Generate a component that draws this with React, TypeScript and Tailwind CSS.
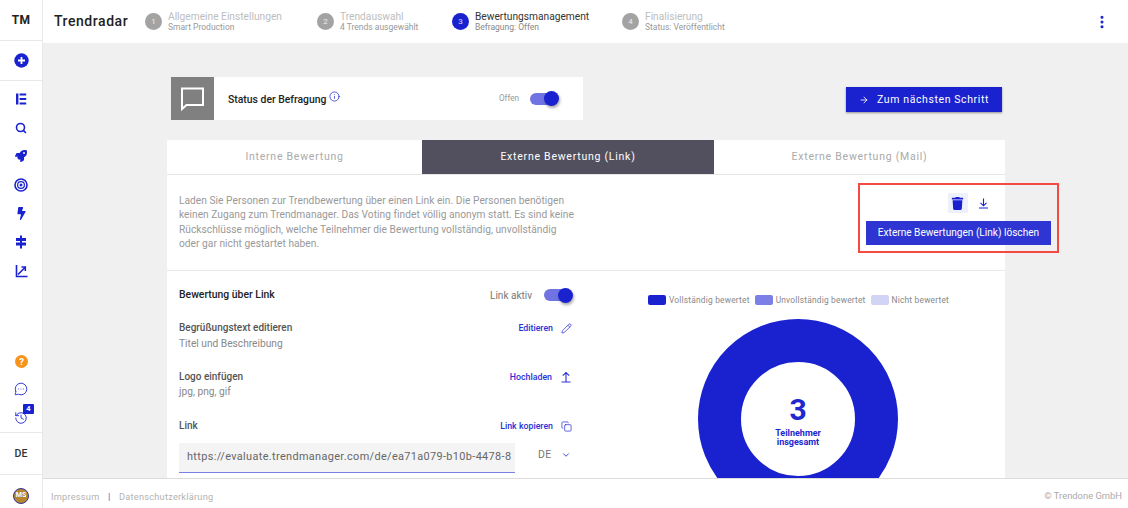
import React from "react";
import { FaRocket, FaTrash, FaBolt } from "react-icons/fa";
import { Pencil, Copy, ChevronDown, ArrowRight, Info, Search, EllipsisVertical, History, MessageCircleMore } from "lucide-react";

const blue = "#1a22d0";

function Step({ n, title, sub, active, w }: { n: number; title: string; sub: string; active?: boolean; w: string }) {
  return (
    <div className={`flex items-center gap-[6px] ${w}`}>
      <div className={`w-[17px] h-[17px] rounded-full flex items-center justify-center text-[8px] text-white/80 ${active ? "bg-[#1a22d0]" : "bg-[#a3a3a3]"}`}>{n}</div>
      <div className="flex flex-col">
        <span className={`text-[10.2px] leading-[12px] ${active ? "text-[#333]" : "text-[#bdbdbd]"}`}>{title}</span>
        <span className={`text-[8.5px] leading-[9.5px] ${active ? "text-[#888]" : "text-[#999]"}`}>{sub}</span>
      </div>
    </div>
  );
}

function Toggle() {
  return (
    <div className="relative w-[28px] h-[12px] rounded-full bg-[#6f74e2]">
      <div className="absolute right-[-1px] top-[-1.5px] w-[15px] h-[15px] rounded-full bg-[#1a22d0] shadow-[1px_2px_3px_rgba(0,0,0,0.35)]" />
    </div>
  );
}

function Row({ title, sub, action, icon }: { title: string; sub?: string; action: string; icon: React.ReactNode }) {
  return (
    <div className="flex justify-between items-start">
      <div className="flex flex-col">
        <span className="text-[10px] leading-[14px] font-medium text-[#555]">{title}</span>
        {sub && <span className="text-[10.2px] leading-[14px] mt-[1.5px] text-[#888]">{sub}</span>}
      </div>
      <div className="flex items-center gap-[8px] text-[#2a32d6]">
        <span className="text-[8.8px] leading-[14px] font-medium">{action}</span>
        {icon}
      </div>
    </div>
  );
}

function Legend({ color, label }: { color: string; label: string }) {
  return (
    <div className="flex items-center gap-[3px]">
      <span className={`w-[18px] h-[10px] rounded-[2px] ${color}`} />
      <span className="text-[8.4px] text-[#888] tracking-[0.2px]">{label}</span>
    </div>
  );
}

export default function App() {
  return (
    <div className="relative w-[1128px] h-[508px] flex overflow-hidden bg-white font-['Roboto',sans-serif]">
      <aside className="w-[43px] shrink-0 border-r border-[#e8e8e8] flex flex-col items-center">
        <div className="w-full h-[41px] flex items-center justify-center border-b border-[#e8e8e8] text-[12px] font-bold text-[#222] tracking-[0.2px]">TM</div>
        <div className="w-full h-[40px] flex items-center justify-center border-b border-[#e8e8e8]">
          <svg width="15" height="15" viewBox="0 0 15 15">
            <circle cx="7.5" cy="7.5" r="7.2" fill={blue} />
            <path d="M7.5 4v7M4 7.5h7" stroke="#fff" strokeWidth="1.8" />
          </svg>
        </div>
        <div className="flex flex-col items-center gap-[14.67px] mt-[11px] text-[#1a22d0]">
          <svg width="12" height="14" viewBox="0 0 12 14" fill={blue}><rect x="1" y="1.5" width="2.4" height="11" /><rect x="4.6" y="1.5" width="6.6" height="2" /><rect x="4.6" y="6" width="6.6" height="2" /><rect x="4.6" y="10.5" width="6.6" height="2" /></svg>
          <div className="h-[14px] flex items-center"><Search size={12} strokeWidth={3.2} /></div>
          <div className="h-[14px] flex items-center"><FaRocket size={12} /></div>
          <svg width="14" height="14" viewBox="0 0 14 14" fill="none" stroke={blue}><circle cx="7" cy="7" r="6" strokeWidth="1.6" /><circle cx="7" cy="7" r="3.4" strokeWidth="1.2" /><circle cx="7" cy="7" r="1.2" fill={blue} strokeWidth="0.5" /></svg>
          <div className="h-[14px] flex items-center"><FaBolt size={13} /></div>
          <svg width="12" height="14" viewBox="0 0 12 14" fill={blue}><rect x="1" y="3" width="10" height="3" /><rect x="1" y="7.5" width="10" height="3" /><rect x="5" y="0.5" width="2" height="13" /></svg>
          <svg width="13" height="14" viewBox="0 0 13 14" fill="none" stroke={blue} strokeWidth="1.6"><path d="M1.5 1v11.5H12.5" /><path d="M3 10.5l7-7" /><path d="M6.5 3H10.3V7" /></svg>
        </div>
        <div className="mt-auto flex flex-col items-center w-full">
          <svg width="13" height="13" viewBox="0 0 13 13" className="mb-[14px]"><circle cx="6.5" cy="6.5" r="6.5" fill="#f7931a" /><text x="6.5" y="10" textAnchor="middle" fontSize="9.5" fontWeight="700" fill="#fff" fontFamily="Roboto">?</text></svg>
          <MessageCircleMore size={14} color={blue} strokeWidth={1.5} className="mb-[15px]" />
          <div className="relative h-[14px] mb-[7px]">
            <History size={14} color={blue} strokeWidth={1.5} />
            <span className="absolute left-[9px] top-[-7px] w-[11px] h-[10px] rounded-[1px] bg-[#1a22d0] text-white text-[7.5px] leading-[10px] font-bold text-center">4</span>
          </div>
          <div className="w-full h-[43px] border-y border-[#e8e8e8] flex items-center justify-center text-[10.5px] font-medium text-[#333]">DE</div>
          <div className="h-[33px] w-full flex items-center justify-center pt-[8px]">
            <div className="w-[16px] h-[16px] rounded-full bg-[#b5852f] border-[1.5px] border-[#33389c] text-[7px] font-bold text-white flex items-center justify-center">MS</div>
          </div>
        </div>
      </aside>

      <div className="flex-1 flex flex-col min-w-0">
        <header className="h-[43px] shrink-0 bg-white flex items-center">
          <span className="ml-[11px] w-[91px] text-[14px] font-medium text-[#222] tracking-[0.55px]">Trendradar</span>
          <Step n={1} title="Allgemeine Einstellungen" sub="Smart Production" w="w-[172px]" />
          <Step n={2} title="Trendauswahl" sub="4 Trends ausgewählt" w="w-[135px]" />
          <Step n={3} title="Bewertungsmanagement" sub="Befragung: Offen" active w="w-[170px]" />
          <Step n={4} title="Finalisierung" sub="Status: Veröffentlicht" w="w-[150px]" />
          <EllipsisVertical size={16} strokeWidth={2.6} color={blue} className="ml-auto mr-[18px]" />
        </header>

        <main className="flex-1 min-h-0 overflow-hidden bg-[#f0f0f0] pl-[124px] pr-[123px] pt-[34px]">
          <div className="flex items-start pl-[4px] pr-[3px]">
            <div className="w-[412px] h-[43px] bg-white flex items-center">
              <div className="w-[43px] h-[43px] bg-[#808080] flex items-center justify-center">
                <svg width="27" height="27" viewBox="0 0 27 27" fill="none" stroke="#fff" strokeWidth="2"><path d="M3 3.5h21v16.5H7.5L3 24z" /></svg>
              </div>
              <span className="ml-[14px] mt-[2px] text-[10.4px] font-medium text-[#222]">Status der Befragung</span>
              <Info size={11} color={blue} strokeWidth={1.6} className="ml-[3px] mb-[4px]" />
              <span className="ml-auto mr-[1px] text-[8.2px] text-[#999]">Offen</span>
              <div className="ml-[10px] mr-[25px]"><Toggle /></div>
            </div>
            <button className="ml-auto mt-[10px] w-[156px] h-[25px] bg-[#1a22d0] shadow-[0_1px_2px_rgba(0,0,0,0.4)] text-white text-[10.5px] tracking-[0.6px] flex items-center justify-center gap-[8px]">
              <ArrowRight size={10} strokeWidth={2} />
              Zum nächsten Schritt
            </button>
          </div>

          <section className="mt-[20px] bg-white">
            <div className="flex h-[35px] border-b border-[#e6e6e6] text-[10.5px] tracking-[0.75px] text-[#aaa]">
              <div className="w-[255px] flex items-center justify-center">Interne Bewertung</div>
              <div className="w-[292px] flex items-center justify-center bg-[#52505f] text-white">Externe Bewertung (Link)</div>
              <div className="flex-1 flex items-center justify-center">Externe Bewertung (Mail)</div>
            </div>

            <div className="h-[96px] border-b border-[#e8e8e8] flex pl-[12px] pr-[11px] pt-[14px]">
              <p className="w-[395px] mt-[5px] text-[10.2px] leading-[14.3px] text-[#999] tracking-[0.03px]">
                Laden Sie Personen zur Trendbewertung über einen Link ein. Die Personen benötigen keinen Zugang zum Trendmanager. Das Voting findet völlig anonym statt. Es sind keine Rückschlüsse möglich, welche Teilnehmer die Bewertung vollständig, unvollständig oder gar nicht gestartet haben.
              </p>
              <div className="ml-auto mr-[-57px] w-[185px] flex flex-col items-center">
                <div className="flex items-center gap-[6px] ml-[24px] mt-[4px]">
                  <span className="w-[20px] h-[20px] bg-[#eef0fb] flex items-center justify-center text-[#1a22d0]"><FaTrash size={13} /></span>
                  <span className="w-[20px] h-[20px] flex items-center justify-center">
                    <svg width="11" height="11" viewBox="0 0 11 11" fill="none" stroke={blue} strokeWidth="1.1"><path d="M5.5 0.5v7M2.5 4.8l3 3 3-3M1 10h9" /></svg>
                  </span>
                </div>
                <button className="mt-[8px] w-[185px] h-[24px] bg-[#2e35d3] text-white text-[10.1px] flex items-center justify-center">Externe Bewertungen (Link) löschen</button>
              </div>
            </div>

            <div className="flex">
              <div className="w-[417px] pl-[12px] pr-[12px] pt-[17px]">
                <div className="flex items-center justify-between h-[14px]">
                  <span className="text-[10.4px] font-medium text-[#222]">Bewertung über Link</span>
                  <div className="flex items-center gap-[12px]">
                    <span className="text-[10px] text-[#777]">Link aktiv</span>
                    <Toggle />
                  </div>
                </div>
                <div className="mt-[19px]">
                  <Row title="Begrüßungstext editieren" sub="Titel und Beschreibung" action="Editieren" icon={<Pencil size={11} strokeWidth={1.6} />} />
                </div>
                <div className="mt-[19px]">
                  <Row title="Logo einfügen" sub="jpg, png, gif" action="Hochladen" icon={
                    <svg width="12" height="12" viewBox="0 0 12 12" fill="none" stroke="currentColor" strokeWidth="1.1"><path d="M6 10.5V1.5M2.8 4.7L6 1.5l3.2 3.2M1.5 11h9" /></svg>
                  } />
                </div>
                <div className="mt-[20px]">
                  <Row title="Link" action="Link kopieren" icon={<Copy size={11} strokeWidth={1.6} />} />
                </div>
                <div className="mt-[10px] flex items-start">
                  <div className="w-[336px] shrink-0 h-[30px] bg-[#f4f4f4] border-b border-[#7a80e6] pl-[8px] flex items-center overflow-hidden whitespace-nowrap text-[10.9px] text-[#666] tracking-[0.36px]">
                    https://evaluate.trendmanager.com/de/ea71a079-b10b-4478-8
                  </div>
                  <span className="ml-[23px] mt-[4px] text-[10.5px] text-[#777] tracking-[0.4px]">DE</span>
                  <ChevronDown size={10} color={blue} strokeWidth={2} className="ml-[9px] mt-[7px]" />
                </div>
              </div>
              <div className="flex-1 pl-[64px] pt-[24px]">
                <div className="flex gap-[5px] h-[10px] items-center">
                  <Legend color="bg-[#1a22d0]" label="Vollständig bewertet" />
                  <Legend color="bg-[#7a80e6]" label="Unvollständig bewertet" />
                  <Legend color="bg-[#d2d4f6]" label="Nicht bewertet" />
                </div>
                <div className="relative ml-[50px] mt-[14px] w-[200px] h-[200px]">
                  <svg width="200" height="200" viewBox="0 0 200 200"><circle cx="100" cy="100" r="78.5" fill="none" stroke={blue} strokeWidth="43" /></svg>
                  <div className="absolute inset-0 flex flex-col items-center justify-center text-[#2027d0]">
                    <span className="text-[30px] leading-[30px] font-bold mt-[4px]">3</span>
                    <span className="text-[9px] leading-[9px] font-bold text-center mt-[4px]">Teilnehmer<br />insgesamt</span>
                  </div>
                </div>
              </div>
            </div>
          </section>
        </main>

        <footer className="h-[30px] shrink-0 bg-white border-t border-[#dcdcdc] flex items-center pt-[6px] pl-[8px] pr-[6px] text-[9.2px] text-[#b3b3b3] tracking-[0.25px]">
          <span>Impressum</span>
          <span className="mx-[8.5px] text-[#2a6fc9]">|</span>
          <span>Datenschutzerklärung</span>
          <span className="ml-auto text-[9.4px] tracking-normal text-[#aaa]">© Trendone GmbH</span>
        </footer>
      </div>

      <div className="absolute left-[858px] top-[183px] w-[201px] h-[70px] border-2 border-[#f44a42] pointer-events-none" />
    </div>
  );
}
